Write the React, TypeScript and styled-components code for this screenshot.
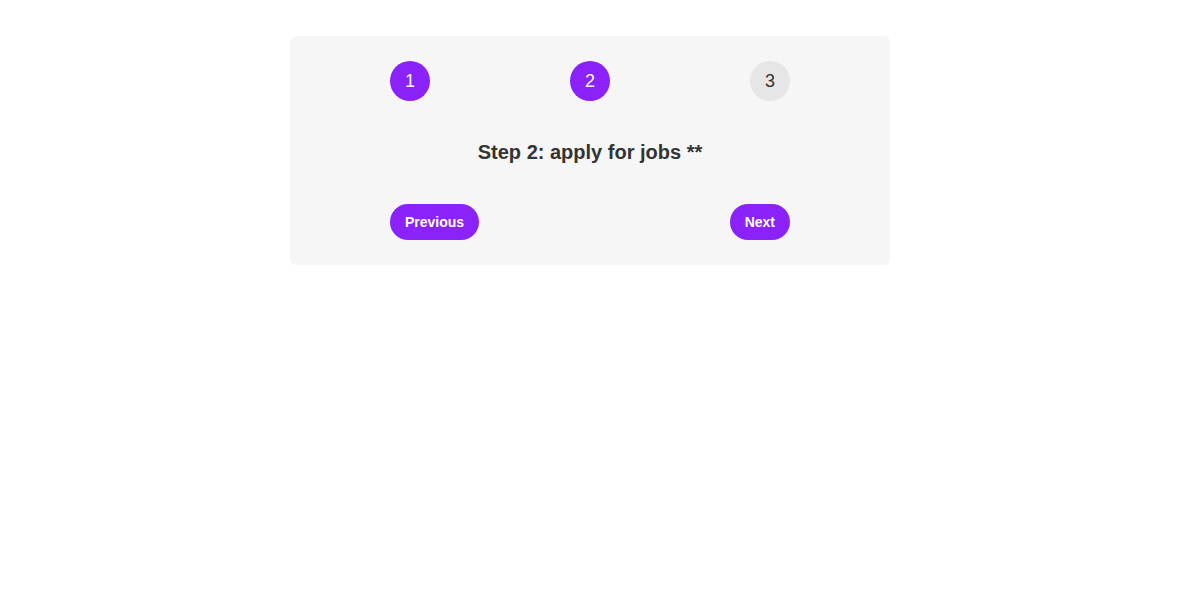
import React from "react";
import styled, { createGlobalStyle } from "styled-components";

const Global = createGlobalStyle`
  html, body { margin: 0; padding: 0; background: #ffffff; }
  body { font-family: "Liberation Sans", Arial, Helvetica, sans-serif; }
`;

const Page = styled.div`
  display: flex;
  justify-content: center;
  padding: 36px 0 0 2px;
`;

const Card = styled.div`
  width: 600px;
  box-sizing: border-box;
  background: #f6f6f6;
  border-radius: 6px;
  padding: 25px 100px;
  display: flex;
  flex-direction: column;
`;

const Steps = styled.div`
  display: flex;
  justify-content: space-between;
`;

const StepCircle = styled.div<{ $active: boolean }>`
  width: 40px;
  height: 40px;
  border-radius: 50%;
  display: flex;
  align-items: center;
  justify-content: center;
  font-size: 18px;
  background: ${(p) => (p.$active ? "#8b21fb" : "#e6e6e6")};
  color: ${(p) => (p.$active ? "#ffffff" : "#333333")};
`;

const Title = styled.h2`
  margin: 39px 0 40px;
  height: 24px;
  line-height: 24px;
  font-size: 20px;
  font-weight: bold;
  text-align: center;
  color: #333333;
`;

const Actions = styled.div`
  display: flex;
  justify-content: space-between;
`;

const Button = styled.button`
  height: 36px;
  padding: 0 15px;
  border: none;
  border-radius: 18px;
  background: #8b21fb;
  color: #ffffff;
  font-family: "Liberation Sans", Arial, sans-serif;
  font-size: 14px;
  font-weight: bold;
  cursor: pointer;
`;

export default function App() {
  const current = 2;
  return (
    <>
      <Global />
      <Page>
        <Card>
          <Steps>
            {[1, 2, 3].map((n) => (
              <StepCircle key={n} $active={n <= current}>
                {n}
              </StepCircle>
            ))}
          </Steps>
          <Title>Step 2: apply for jobs **</Title>
          <Actions>
            <Button>Previous</Button>
            <Button>Next</Button>
          </Actions>
        </Card>
      </Page>
    </>
  );
}
